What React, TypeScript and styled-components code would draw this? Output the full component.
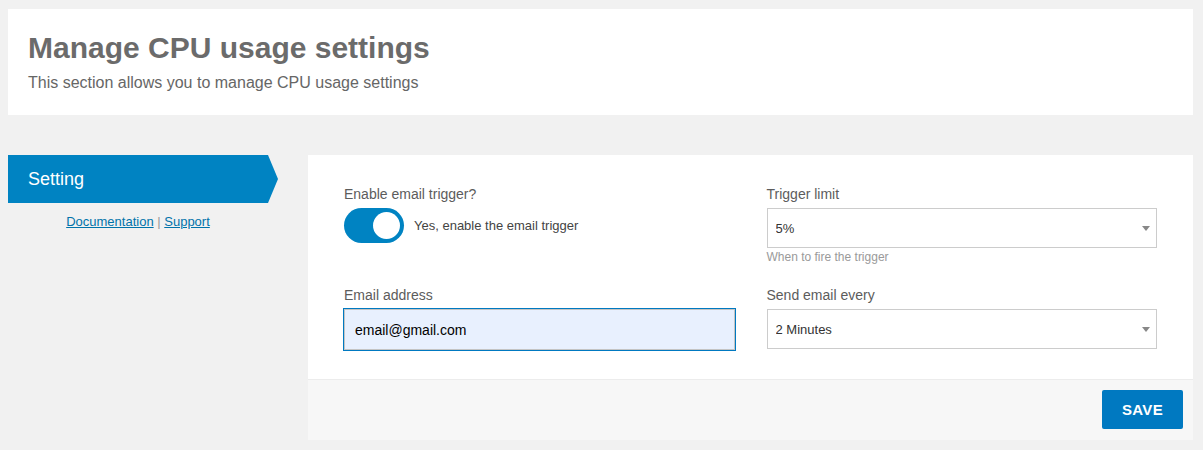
import React, { useState } from 'react';
import styled, { createGlobalStyle } from 'styled-components';

const GlobalStyle = createGlobalStyle`
  html, body {
    margin: 0;
    padding: 0;
    background: #f1f1f1;
    font-family: 'Liberation Sans', Arial, Helvetica, sans-serif;
  }
`;

const Page = styled.div`
  padding: 9px 10px 10px 8px;
`;

const Header = styled.header`
  background: #fff;
  padding: 22px 20px 22px;
`;

const Title = styled.h1`
  margin: 0;
  font-size: 30px;
  line-height: 34px;
  font-weight: 700;
  color: #6b6b6b;
`;

const Subtitle = styled.p`
  margin: 8px 0 0;
  font-size: 16px;
  line-height: 20px;
  color: #666;
`;

const Body = styled.div`
  display: flex;
  margin-top: 40px;
`;

const Sidebar = styled.nav`
  width: 300px;
  flex-shrink: 0;
`;

const Tab = styled.div`
  width: 270px;
  height: 48px;
  box-sizing: border-box;
  padding-left: 20px;
  display: flex;
  align-items: center;
  background: #0083c2;
  color: #fff;
  font-size: 18px;
  clip-path: polygon(0 0, 260px 0, 270px 50%, 260px 100%, 0 100%);
`;

const Links = styled.div`
  width: 260px;
  margin-top: 10px;
  text-align: center;
  font-size: 13px;
  line-height: 18px;
  color: #999;
`;

const Link = styled.a`
  color: #0073aa;
  text-decoration: underline;
`;

const Panel = styled.section`
  flex: 1;
  background: #fff;
`;

const Fields = styled.div`
  display: grid;
  grid-template-columns: 1fr 1fr;
  column-gap: 32px;
  row-gap: 21px;
  padding: 30px 36px 29px 36px;
`;

const Field = styled.div`
  display: flex;
  flex-direction: column;
`;

const Label = styled.label`
  font-size: 14px;
  line-height: 18px;
  color: #5c5c5c;
  margin-bottom: 5px;
`;

const ToggleRow = styled.div`
  display: flex;
  align-items: center;
  gap: 10px;
  font-size: 13px;
  color: #444;
`;

const Switch = styled.button<{ $on: boolean }>`
  position: relative;
  width: 60px;
  height: 35px;
  border: none;
  border-radius: 18px;
  padding: 0;
  cursor: pointer;
  background: ${({ $on }) => ($on ? '#0083c2' : '#ccc')};

  &::after {
    content: '';
    position: absolute;
    top: 4px;
    left: ${({ $on }) => ($on ? '29px' : '4px')};
    width: 27px;
    height: 27px;
    border-radius: 50%;
    background: #fff;
  }
`;

const TextInput = styled.input<{ $focused?: boolean }>`
  box-sizing: border-box;
  height: 41px;
  padding: 0 10px;
  font-family: inherit;
  font-size: 14px;
  color: #000;
  background: ${({ $focused }) => ($focused ? '#e8f0fe' : '#fff')};
  border: 1px solid #c4c4c4;
  border-radius: 0;
  outline: none;
  box-shadow: ${({ $focused }) => ($focused ? '0 0 0 1px #0079c1' : 'none')};
`;

const SelectWrap = styled.div`
  position: relative;
`;

const Select = styled.select`
  box-sizing: border-box;
  width: 100%;
  height: 40px;
  padding: 0 8px;
  appearance: none;
  -webkit-appearance: none;
  font-family: inherit;
  font-size: 13px;
  color: #333;
  background: #fff;
  border: 1px solid #ccc;
  border-radius: 0;
  outline: none;
`;

const Caret = styled.span`
  position: absolute;
  right: 7px;
  top: 50%;
  margin-top: -2px;
  border-left: 4px solid transparent;
  border-right: 4px solid transparent;
  border-top: 5px solid #888;
  pointer-events: none;
`;

const Help = styled.div`
  margin-top: 1px;
  font-size: 12px;
  line-height: 16px;
  color: #9a9a9a;
`;

const Footer = styled.div`
  display: flex;
  justify-content: flex-end;
  padding: 10px 10px 11px;
  background: #f7f7f7;
  border-top: 1px solid #ececec;
`;

const SaveButton = styled.button`
  width: 81px;
  height: 39px;
  border: none;
  border-radius: 2px;
  background: #0079c1;
  color: #fff;
  font-family: inherit;
  font-size: 15px;
  font-weight: 700;
  letter-spacing: 0.3px;
  cursor: pointer;
`;

const App = () => {
  const [enabled, setEnabled] = useState(true);
  const [email, setEmail] = useState('email@gmail.com');
  const [limit, setLimit] = useState('5%');
  const [every, setEvery] = useState('2 Minutes');

  return (
    <>
      <GlobalStyle />
      <Page>
        <Header>
          <Title>Manage CPU usage settings</Title>
          <Subtitle>This section allows you to manage CPU usage settings</Subtitle>
        </Header>

        <Body>
          <Sidebar>
            <Tab>Setting</Tab>
            <Links>
              <Link href="#">Documentation</Link> | <Link href="#">Support</Link>
            </Links>
          </Sidebar>

          <Panel>
            <Fields>
              <Field>
                <Label>Enable email trigger?</Label>
                <ToggleRow>
                  <Switch $on={enabled} onClick={() => setEnabled(!enabled)} />
                  Yes, enable the email trigger
                </ToggleRow>
              </Field>

              <Field>
                <Label>Trigger limit</Label>
                <SelectWrap>
                  <Select value={limit} onChange={(e) => setLimit(e.target.value)}>
                    {['5%', '10%', '25%', '50%', '75%', '90%'].map((v) => (
                      <option key={v}>{v}</option>
                    ))}
                  </Select>
                  <Caret />
                </SelectWrap>
                <Help>When to fire the trigger</Help>
              </Field>

              <Field>
                <Label>Email address</Label>
                <TextInput
                  $focused
                  value={email}
                  onChange={(e) => setEmail(e.target.value)}
                />
              </Field>

              <Field>
                <Label>Send email every</Label>
                <SelectWrap>
                  <Select value={every} onChange={(e) => setEvery(e.target.value)}>
                    {['1 Minute', '2 Minutes', '5 Minutes', '10 Minutes'].map((v) => (
                      <option key={v}>{v}</option>
                    ))}
                  </Select>
                  <Caret />
                </SelectWrap>
              </Field>
            </Fields>

            <Footer>
              <SaveButton>SAVE</SaveButton>
            </Footer>
          </Panel>
        </Body>
      </Page>
    </>
  );
};

export default App;
